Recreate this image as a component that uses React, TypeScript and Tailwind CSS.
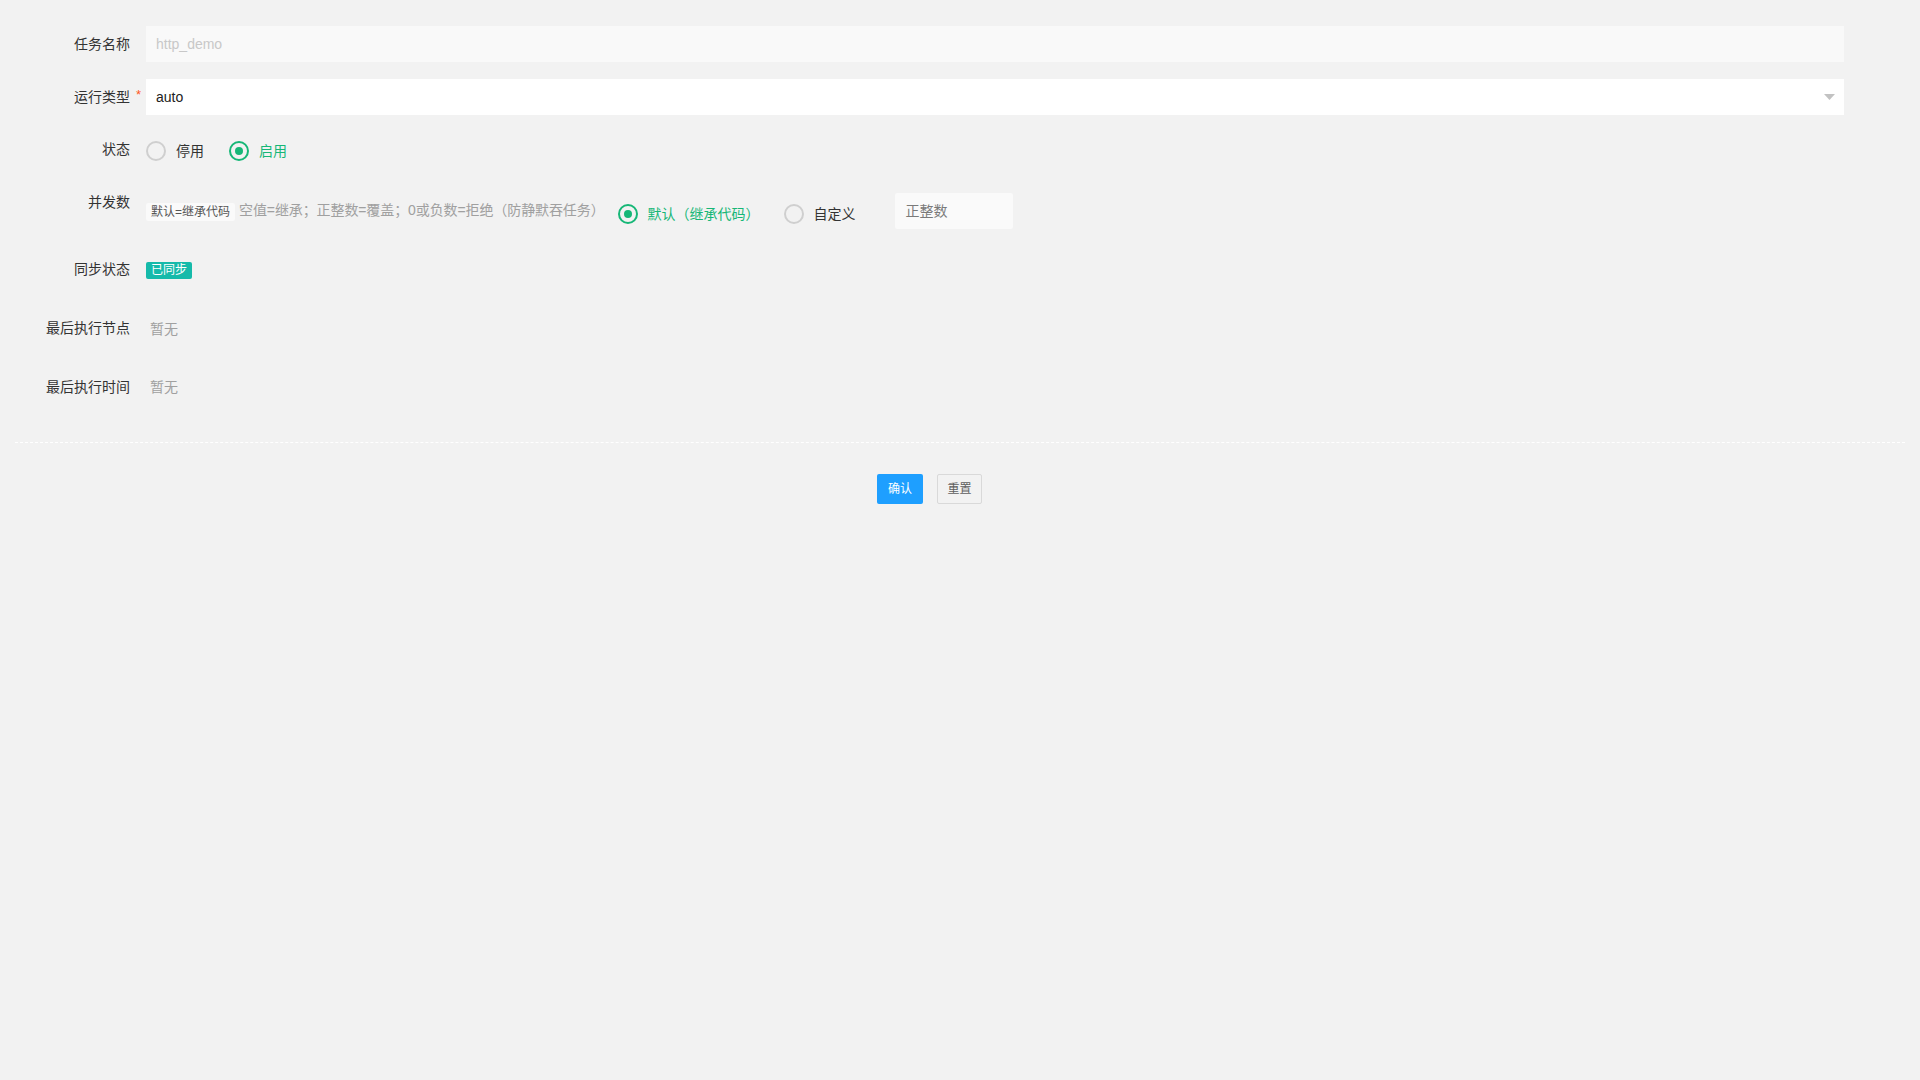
import React from "react";

const font = { fontFamily: '"Liberation Sans", "Noto Sans CJK SC", sans-serif' };

function Radio({ checked, label }: { checked?: boolean; label: string }) {
  return (
    <div className="flex items-center">
      {checked ? (
        <span className="flex h-5 w-5 items-center justify-center rounded-full border-2 border-[#16b777]">
          <span className="h-[8px] w-[8px] rounded-full bg-[#16b777]" />
        </span>
      ) : (
        <span className="h-5 w-5 rounded-full border-2 border-[#cfcfcf]" />
      )}
      <span className={"ml-[10px] text-[14px] leading-5 " + (checked ? "text-[#16b777]" : "text-[#333]")}>{label}</span>
    </div>
  );
}

function Label({ children, required }: { children: React.ReactNode; required?: boolean }) {
  return (
    <div className="relative w-[131px] shrink-0 pr-4 text-right text-[14px] leading-9 text-[#333]">
      {children}
      {required && (
        <span className="absolute right-[5px] top-[8px] text-[13px] leading-4 text-[#ff5722]">*</span>
      )}
    </div>
  );
}

export default function App() {
  return (
    <div className="min-h-[1080px] w-full bg-[#f2f2f2] px-[15px] pt-[26px]" style={font}>
      {/* 任务名称 */}
      <div className="mb-[17px] flex h-9">
        <Label>任务名称</Label>
        <div className="mr-[61px] flex h-9 flex-1 items-center bg-[#f9f9f9] px-[10px] text-[14px] text-[#c8c8c8]">
          http_demo
        </div>
      </div>

      {/* 运行类型 */}
      <div className="mb-[17px] flex h-9">
        <Label required>运行类型</Label>
        <div className="mr-[61px] flex h-9 flex-1 items-center justify-between bg-white px-[10px] text-[14px] text-[#222]">
          <span>auto</span>
          <svg width="11" height="6" viewBox="0 0 11 6" className="mr-[-1px]">
            <path d="M0 0 H11 L5.5 6 Z" fill="#c2c2c2" />
          </svg>
        </div>
      </div>

      {/* 状态 */}
      <div className="mb-[17px] flex h-9">
        <div className="mt-[-1px]">
          <Label>状态</Label>
        </div>
        <div className="flex flex-1 items-center pt-[1px]">
          <Radio label="停用" />
          <div className="ml-[25px]">
            <Radio checked label="启用" />
          </div>
        </div>
      </div>

      {/* 并发数 */}
      <div className="mb-[17px] flex h-[49px]">
        <div className="mt-[-1px]">
          <Label>并发数</Label>
        </div>
        <div className="flex flex-1 items-start pt-2">
          <span className="mt-[10px] h-[18px] rounded-[2px] bg-[#fafafa] px-[5px] text-[12px] leading-[18px] text-[#555]">
            默认=继承代码
          </span>
          <span className="ml-[4px] mt-[7px] text-[14px] leading-5 tracking-[-0.1px] text-[#a0a0a0]">
            空值=继承；正整数=覆盖；0或负数=拒绝（防静默吞任务）
          </span>
          <div className="ml-[13px] mt-[11px]">
            <Radio checked label="默认（继承代码）" />
          </div>
          <div className="ml-[24px] mt-[11px]">
            <Radio label="自定义" />
          </div>
          <div className="ml-[39px] flex h-9 w-[118px] items-center rounded-[2px] bg-[#fafafa] px-[11px] text-[14px] text-[#7a7a7a]">
            正整数
          </div>
        </div>
      </div>

      {/* 同步状态 */}
      <div className="mb-[17px] flex h-[43px]">
        <Label>同步状态</Label>
        <div className="flex flex-1 items-start pt-[11px]">
          <span className="h-[17px] rounded-[2px] bg-[#16baaa] px-[5px] text-[12px] leading-[17px] text-white">
            已同步
          </span>
        </div>
      </div>

      {/* 最后执行节点 */}
      <div className="mb-[17px] flex h-[41px]">
        <div className="mt-[-1px]">
          <Label>最后执行节点</Label>
        </div>
        <div className="flex-1 pl-[4px] text-[14px] leading-9 text-[#a0a0a0]">暂无</div>
      </div>

      {/* 最后执行时间 */}
      <div className="flex h-[41px]">
        <Label>最后执行时间</Label>
        <div className="flex-1 pl-[4px] text-[14px] leading-9 text-[#a0a0a0]">暂无</div>
      </div>

      <div className="mt-[32px] border-t border-dashed border-white" />

      <div className="mr-[61px] mt-[31px] flex justify-center gap-[14px]">
        <button className="h-[30px] w-[46px] rounded-[2px] bg-[#1e9fff] text-[12px] text-white">确认</button>
        <button className="h-[30px] w-[45px] rounded-[2px] border border-[#d9d9d9] bg-[#f2f2f2] text-[12px] text-[#5f5f5f]">
          重置
        </button>
      </div>
    </div>
  );
}
